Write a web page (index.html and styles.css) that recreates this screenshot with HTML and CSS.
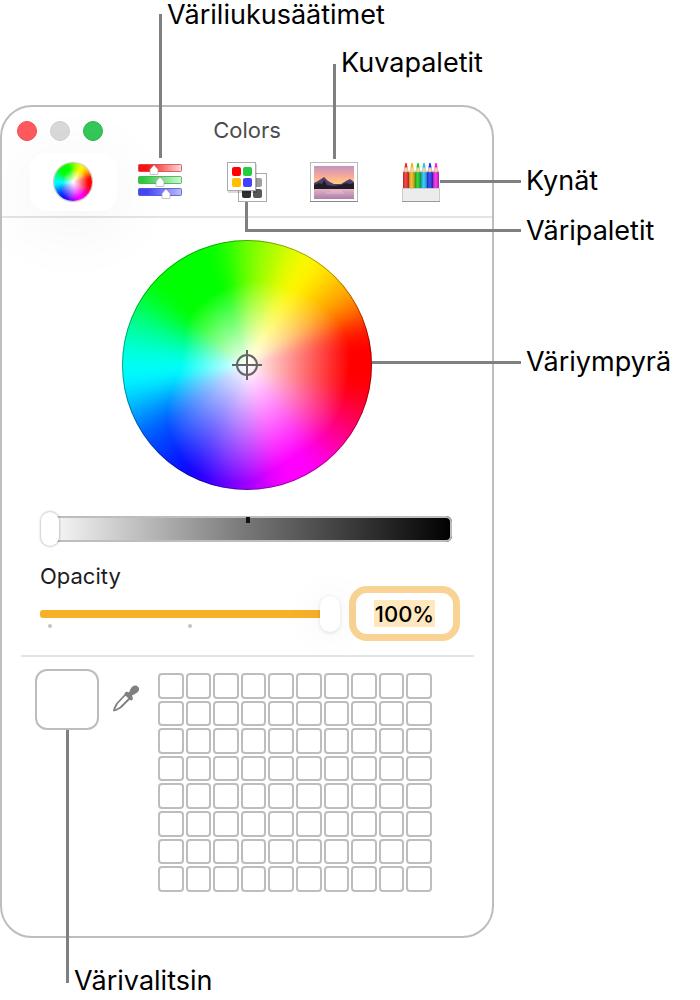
FILE: index.html
```html
<!DOCTYPE html>
<html lang="fi">
<head>
  <meta charset="UTF-8">
  <meta name="viewport" content="width=device-width, initial-scale=1.0">
  <title>Colors</title>
  <link rel="stylesheet" href="styles.css">
</head>
<body>
  <main class="figure">
    <section class="window">
      <header class="titlebar">
        <div class="lights">
          <button class="light close" aria-label="Close"></button>
          <button class="light minimize" aria-label="Minimize"></button>
          <button class="light zoom" aria-label="Zoom"></button>
        </div>
        <h1 class="title">Colors</h1>
      </header>

      <nav class="tools">
        <button class="tool selected" aria-label="Color wheel"><canvas class="mini-wheel" width="38" height="38"></canvas></button>
        <button class="tool" aria-label="Color sliders">
          <svg width="44" height="36" viewBox="0 0 44 36">
            <defs>
              <linearGradient id="red"><stop offset="0.2" stop-color="#fa1010"/><stop offset="1" stop-color="#fddcdc"/></linearGradient>
              <linearGradient id="green"><stop offset="0.1" stop-color="#2cc840"/><stop offset="1" stop-color="#cdf8d0"/></linearGradient>
              <linearGradient id="blue"><stop offset="0.2" stop-color="#4444f8"/><stop offset="1" stop-color="#bcbcfb"/></linearGradient>
            </defs>
            <rect x="0.5" y="0.5" width="43" height="7" rx="1" fill="url(#red)" stroke="#c83030" stroke-opacity="0.7"/>
            <rect x="0.5" y="12.5" width="43" height="7" rx="1" fill="url(#green)" stroke="#2a9c38" stroke-opacity="0.7"/>
            <rect x="0.5" y="24.5" width="43" height="7" rx="1" fill="url(#blue)" stroke="#3c3cc0" stroke-opacity="0.7"/>
            <g fill="#fff" stroke="#999" stroke-width="0.6">
              <path d="M16 1l4 4.500v4q0 1-1 1h-6q-1 0-1-1v-4z"/>
              <path d="M22 13l4 4.500v4q0 1-1 1h-6q-1 0-1-1v-4z"/>
              <path d="M28 25l4 4.500v4q0 1-1 1h-6q-1 0-1-1v-4z"/>
            </g>
          </svg>
        </button>
        <button class="tool" aria-label="Color palettes">
          <svg width="42" height="42" viewBox="0 0 42 42">
            <rect x="12.500" y="12.500" width="28" height="28" fill="#fff" stroke="#aaa"/>
            <rect x="27" y="17" width="9" height="9" rx="2" fill="#9b9da0"/>
            <rect x="16" y="28" width="9" height="9" rx="2" fill="#303030"/>
            <rect x="27" y="28" width="9" height="9" rx="2" fill="#58595b"/>
            <rect x="2" y="3" width="29" height="29" fill="#000" opacity="0.15"/>
            <rect x="1.500" y="1.500" width="28" height="28" fill="#fff" stroke="#aaa"/>
            <rect x="6" y="6" width="9" height="9" rx="2" fill="#ff0000"/>
            <rect x="17" y="6" width="9" height="9" rx="2" fill="#28cc41"/>
            <rect x="6" y="17" width="9" height="9" rx="2" fill="#ffbf00"/>
            <rect x="17" y="17" width="9" height="9" rx="2" fill="#4040ff"/>
          </svg>
        </button>
        <button class="tool" aria-label="Image palettes">
          <svg width="48" height="42" viewBox="0 0 48 42">
            <defs>
              <linearGradient id="sky" x2="0" y2="1"><stop offset="0" stop-color="#c493c0"/><stop offset="0.45" stop-color="#f8aa98"/><stop offset="0.8" stop-color="#ffd27c"/></linearGradient>
              <linearGradient id="lake" x2="0" y2="1"><stop offset="0" stop-color="#f0b8c8"/><stop offset="1" stop-color="#aa7fab"/></linearGradient>
            </defs>
            <rect x="0.5" y="1.500" width="47" height="39" fill="#fff" stroke="#bbb"/>
            <path d="M0 40.500h48" stroke="#888"/>
            <rect x="4" y="5" width="40" height="23" fill="url(#sky)"/>
            <rect x="4" y="27" width="40" height="11" fill="url(#lake)"/>
            <path d="M4 22l4-2 3-2 3-2 4 4 6 3h7l5-3 4-2 4 3v6H4z" fill="#51406c"/>
            <path d="M4 24l5-2 3 1 2-4 3 5 6 1 8-1 5-2 4 1 4-1v6H4z" fill="#211d26"/>
            <path d="M20 30h12M16 32h18" stroke="#f8ced6" opacity="0.6"/>
          </svg>
        </button>
        <button class="tool" aria-label="Pencils">
          <svg width="38" height="42" viewBox="0 0 38 42">
            <defs>
              <linearGradient id="shade"><stop offset="0" stop-color="#000" stop-opacity="0.25"/><stop offset="0.4" stop-color="#fff" stop-opacity="0.15"/><stop offset="1" stop-color="#000" stop-opacity="0.3"/></linearGradient>
              <g id="pencil">
                <path d="M0 12L2 6h2l2 6v16H0z"/>
                <path d="M0 11.500L2 6h2l2 5.500-1.500-1L3 11.500l-1.500-1z" fill="#ecd0a8"/>
                <path d="M1.500 6.500L2.200 2.500q.8-1.500 1.600 0l.7 4z"/>
                <rect y="11" width="6" height="17" fill="url(#shade)"/>
              </g>
            </defs>
            <use href="#pencil" x="1" fill="#f0262c"/>
            <use href="#pencil" x="7" fill="#eeb512"/>
            <use href="#pencil" x="13" fill="#12cc20"/>
            <use href="#pencil" x="19" fill="#20bdfa"/>
            <use href="#pencil" x="25" fill="#1c30f0"/>
            <use href="#pencil" x="31" fill="#f41ae8"/>
            <rect x="0.5" y="27.500" width="37" height="13" fill="#ececec" stroke="#ccc"/>
            <path d="M0 40.500h38" stroke="#999"/>
          </svg>
        </button>
      </nav>

      <div class="wheel">
        <canvas class="wheel-canvas" width="250" height="250"></canvas>
        <svg class="crosshair" width="30" height="30" viewBox="0 0 30 30" fill="none" stroke="#646464" stroke-width="2">
          <circle cx="15" cy="15" r="10"/>
          <path d="M15 0v30M0 15h30"/>
        </svg>
      </div>

      <div class="brightness">
        <input class="brightness-range" type="range" min="0" max="100" value="0" aria-label="Brightness">
        <span class="notch"></span>
      </div>

      <div class="opacity">
        <div class="opacity-main">
          <label class="opacity-label" for="opacity">Opacity</label>
          <div class="opacity-slider">
            <input class="opacity-range" id="opacity" type="range" min="0" max="100" value="100">
            <span class="dot start"></span>
            <span class="dot middle"></span>
          </div>
        </div>
        <div class="opacity-field">
          <input class="opacity-value" id="value" type="text" value="100%" aria-label="Opacity value">
        </div>
      </div>

      <div class="swatches">
        <button class="well" aria-label="Selected color"></button>
        <button class="picker" aria-label="Pick a color">
          <svg width="28" height="28" viewBox="0 0 28 28">
            <path d="M14 10l4 4-9.500 9.500-4.500 2.500-2 .5.500-2L5 19.500z" fill="#fff" stroke="#808080" stroke-width="1.800" stroke-linejoin="round"/>
            <path d="M12.500 9.500q1-2.500 3.500-1.500l1 .5 1.500-3.500q2-4 5.500-3.500 3.500 1 3 4.500-.5 2.500-4 4l-3 1.500.5 1.500q1 2.500-1 3.500l-1.500-.5-5-5z" fill="#808080"/>
          </svg>
        </button>
        <div class="grid" id="grid"></div>
      </div>
    </section>

    <div class="line to-sliders"></div>
    <div class="line to-images"></div>
    <div class="line to-pencils"></div>
    <div class="line to-palettes"></div>
    <div class="line to-wheel"></div>
    <div class="line to-well"></div>

    <p class="callout sliders">Väriliukusäätimet</p>
    <p class="callout images">Kuvapaletit</p>
    <p class="callout pencils">Kynät</p>
    <p class="callout palettes">Väripaletit</p>
    <p class="callout wheel-name">Väriympyrä</p>
    <p class="callout well-name">Värivalitsin</p>
  </main>

  <script src="script.js"></script>
</body>
</html>
```

FILE: styles.css
```css
* {
  box-sizing: border-box;
  margin: 0;
  padding: 0;
  font-family: Inter, "Liberation Sans", sans-serif;
}

body {
  background: #fff;
  color: #000;
}

button {
  background: none;
  border: none;
  cursor: pointer;
}

.figure {
  position: relative;
  padding: 105px 0 60px;
}

.window {
  width: 100%;
  max-width: 494px;
  padding-bottom: 44px;
  border: 2px solid #bdbdbd;
  border-radius: 32px;
  overflow: hidden;
}

/* title bar */

.titlebar {
  display: grid;
  grid-template-columns: 1fr auto 1fr;
  align-items: center;
  height: 46px;
  padding: 0 15px;
}

.lights {
  display: flex;
  gap: 13px;
  padding-top: 2px;
}

.light {
  width: 20px;
  height: 20px;
  border-radius: 50%;
}

.close {
  background: #ff5a5f;
  border: 1px solid #ee4b50;
}

.minimize {
  background: #d9d9d9;
  border: 1px solid #d0d0d0;
}

.zoom {
  background: #34c759;
  border: 1px solid #2bb64e;
}

.title {
  font-size: 22px;
  font-weight: 400;
  line-height: 28px;
  color: #4c4c4e;
}

/* tools */

.tools {
  display: flex;
  padding: 0 28px 5px;
  border-bottom: 2px solid #e4e4e4;
}

.tool {
  display: flex;
  flex: 1;
  align-items: center;
  justify-content: center;
  height: 58px;
  border-radius: 16px;
}

.selected {
  background: #fff;
  box-shadow: 0 12px 70px 4px rgba(0, 0, 0, 0.05);
}

.mini-wheel {
  width: 38px;
  height: 38px;
  border-radius: 50%;
  box-shadow: 0 0 1px 1px rgba(0, 0, 0, 0.25);
}

/* color wheel */

.wheel {
  position: relative;
  width: 250px;
  height: 250px;
  margin: 22px auto 0;
}

.wheel-canvas {
  display: block;
  border-radius: 50%;
}

.wheel::after {
  content: "";
  position: absolute;
  inset: 0;
  border: 1px solid rgba(0, 0, 0, 0.35);
  border-radius: 50%;
}

.crosshair {
  position: absolute;
  top: 110px;
  left: 110px;
}

/* sliders */

input[type="range"] {
  display: block;
  width: 100%;
  height: 34px;
  appearance: none;
  -webkit-appearance: none;
  background: none;
}

.brightness {
  position: relative;
  margin: 22px 40px 0 39px;
}

.brightness-range::-webkit-slider-runnable-track {
  height: 26px;
  border-radius: 6px;
  background: linear-gradient(to right, #fff, #777 50%, #000);
  box-shadow: inset 0 0 0 2px #bdbdbd;
}

.brightness-range::-webkit-slider-thumb {
  -webkit-appearance: none;
  width: 18px;
  height: 34px;
  margin-top: -4px;
  border-radius: 9px;
  background: #fff;
  box-shadow: 0 0 2px 1px rgba(0, 0, 0, 0.2);
}

.notch {
  position: absolute;
  top: 5px;
  left: calc(50% - 1px);
  width: 4px;
  height: 6px;
  background: #111;
}

.opacity {
  display: flex;
  align-items: flex-end;
  gap: 9px;
  margin-top: 16px;
  padding: 0 32px 0 38px;
}

.opacity-main {
  flex: 1;
  padding-bottom: 10px;
}

.opacity-label {
  display: block;
  margin-bottom: 7px;
  font-size: 22px;
  font-weight: 400;
  line-height: 28px;
  color: #1c1c1e;
}

.opacity-slider {
  position: relative;
}

.opacity-range::-webkit-slider-runnable-track {
  height: 8px;
  border-radius: 3px;
  background: #f7b027;
}

.opacity-range::-webkit-slider-thumb {
  -webkit-appearance: none;
  width: 20px;
  height: 36px;
  margin-top: -14px;
  border-radius: 10px;
  background: #fff;
  box-shadow: 0 1px 4px rgba(0, 0, 0, 0.12), 0 0 40px rgba(0, 0, 0, 0.08);
}

.dot {
  position: absolute;
  top: 27px;
  width: 4px;
  height: 4px;
  border-radius: 50%;
  background: #c4c4c4;
}

.start {
  left: 8px;
}

.middle {
  left: calc(50% - 2px);
}

.opacity-field {
  display: flex;
  align-items: center;
  justify-content: center;
  width: 111px;
  height: 55px;
  border: 7px solid #f9d393;
  border-radius: 18px;
  background: #fff;
}

.opacity-value {
  width: 61px;
  height: 27px;
  border: none;
  outline: none;
  background: #ffe8bd;
  font-size: 22px;
  font-weight: 500;
  text-align: center;
}

/* swatches */

.swatches {
  display: flex;
  align-items: flex-start;
  margin: 14px 18px 0 19px;
  padding: 12px 0 0 14px;
  border-top: 2px solid #e4e4e4;
}

.well {
  width: 64px;
  height: 61px;
  border: 2px solid #bdbdbd;
  border-radius: 12px;
  background: #fff;
}

.picker {
  width: 28px;
  height: 28px;
  margin: 15px 18px 0 13px;
}

.grid {
  display: grid;
  flex: 0 1 274px;
  grid-template-columns: repeat(10, 1fr);
  gap: 2px;
  margin-top: 4px;
}

.swatch {
  aspect-ratio: 1;
  border: 2px solid #bdbdbd;
  border-radius: 4px;
  background: #fff;
}

/* callouts */

.callout {
  position: absolute;
  font-size: 27px;
  line-height: 32px;
  white-space: nowrap;
}

.sliders {
  top: -1px;
  left: 167px;
}

.images {
  top: 47px;
  left: 341px;
}

.pencils {
  top: 165px;
  left: 526px;
}

.palettes {
  top: 215px;
  left: 526px;
}

.wheel-name {
  top: 346px;
  left: 526px;
}

.well-name {
  top: 965px;
  left: 74px;
}

.line {
  position: absolute;
  border: 0 solid #808080;
}

.to-sliders {
  top: 14px;
  left: 159px;
  height: 144px;
  border-left-width: 3px;
}

.to-images {
  top: 64px;
  left: 333px;
  height: 95px;
  border-left-width: 3px;
}

.to-pencils {
  top: 180px;
  left: 440px;
  width: 81px;
  border-top-width: 3px;
}

.to-palettes {
  top: 202px;
  left: 245px;
  width: 276px;
  height: 30px;
  border-left-width: 3px;
  border-bottom-width: 3px;
}

.to-wheel {
  top: 361px;
  left: 372px;
  width: 149px;
  border-top-width: 3px;
}

.to-well {
  top: 730px;
  left: 66px;
  height: 253px;
  border-left-width: 3px;
}
```

FILE: script.js
```javascript
// angle (clockwise from top), red, green, blue, radius where the hue is fully saturated
const STOPS = [
  [0, 110, 255, 0, 84],
  [28, 255, 250, 0, 88],
  [36, 255, 240, 0, 90],
  [58, 255, 150, 0, 100],
  [77, 255, 0, 0, 104],
  [100, 255, 0, 0, 102],
  [125, 255, 0, 130, 106],
  [147, 255, 0, 255, 102],
  [163, 255, 0, 255, 106],
  [183, 140, 0, 255, 120],
  [208, 10, 0, 255, 120],
  [235, 0, 90, 255, 98],
  [262, 0, 250, 255, 68],
  [272, 0, 255, 245, 65],
  [290, 0, 255, 150, 66],
  [310, 0, 255, 0, 76],
  [345, 0, 255, 0, 80],
  [360, 110, 255, 0, 84]
];

function hueAt(angle) {
  angle = (angle + 360) % 360;
  let i = 1;
  while (STOPS[i][0] < angle) i++;
  const a = STOPS[i - 1];
  const b = STOPS[i];
  const t = (angle - a[0]) / (b[0] - a[0]);
  return a.map((v, n) => v + (b[n] - v) * t);
}

// average the neighbouring angles so no spokes show between the stops
const HUES = [];
for (let angle = 0; angle < 720; angle++) {
  const sum = [0, 0, 0, 0, 0];
  for (let d = -8; d <= 8; d++) {
    hueAt(angle / 2 + d).forEach((v, n) => sum[n] += v / 17);
  }
  HUES.push(sum);
}

function drawWheel(canvas) {
  const ctx = canvas.getContext('2d');
  const size = canvas.width;
  const scale = 250 / size;
  const image = ctx.createImageData(size, size);

  for (let y = 0; y < size; y++) {
    for (let x = 0; x < size; x++) {
      const dx = (x + 0.5 - size / 2) * scale;
      const dy = (y + 0.5 - size / 2) * scale;
      const angle = Math.atan2(dx, -dy) * 180 / Math.PI + 360;
      const hue = HUES[Math.round(angle * 2) % 720];
      const saturation = Math.min(1, Math.hypot(dx, dy) / hue[4]);
      const p = (y * size + x) * 4;
      for (let c = 0; c < 3; c++) {
        image.data[p + c] = 255 - (255 - hue[c + 1]) * saturation;
      }
      image.data[p + 3] = 255;
    }
  }
  ctx.putImageData(image, 0, 0);
}

function fillGrid() {
  const grid = document.getElementById('grid');
  for (let i = 0; i < 80; i++) {
    const swatch = document.createElement('button');
    swatch.className = 'swatch';
    swatch.setAttribute('aria-label', `Swatch ${i + 1}`);
    grid.appendChild(swatch);
  }
}

const range = document.getElementById('opacity');
const value = document.getElementById('value');
range.addEventListener('input', () => {
  value.value = `${range.value}%`;
});

document.querySelectorAll('canvas').forEach(drawWheel);
fillGrid();
```
